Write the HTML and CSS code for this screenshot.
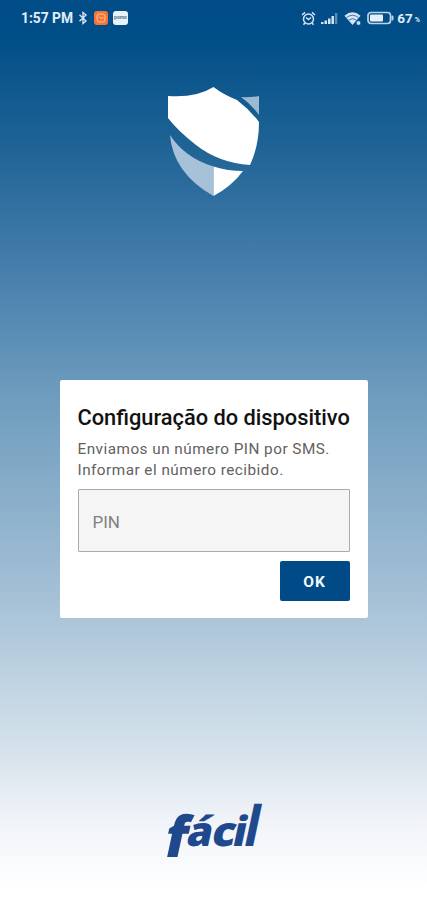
FILE: index.html
```html
<!DOCTYPE html>
<html lang="pt">

<head>
    <meta charset="UTF-8">
    <meta name="viewport" content="width=device-width, initial-scale=1.0">
    <title>Configuração do dispositivo</title>
    <link rel="stylesheet" href="styles.css">
</head>

<body>
    <div class="screen">
        <header class="status-bar">
            <div class="status-left">
                <span class="time">1:57 PM</span>
                <svg class="bluetooth" width="10" height="14" viewBox="0 0 10 14">
                    <path d="M1.5 3.8 8 10 5 12.5V1.5L8 4 1.5 10.2" />
                </svg>
                <svg class="app-icon" width="14" height="14" viewBox="0 0 14 14">
                    <rect width="14" height="14" rx="3" fill="#f47735" />
                    <rect x="3" y="3" width="8" height="8" rx="2.5" fill="none" stroke="#ffc5a5" />
                    <path d="M5 5.5l2 2 2.5-1" fill="none" stroke="#ffc5a5" />
                </svg>
                <span class="app-badge">pomo</span>
            </div>
            <div class="status-right">
                <svg width="15" height="15" viewBox="0 0 15 15" fill="none" stroke="#d5e4f3" stroke-width="1.5">
                    <circle cx="7.5" cy="8" r="5" />
                    <path d="M1 4l3-2.6M14 4l-3-2.6M5 6.5l2.5 2 2.5-2M3.8 12l-1.3 1.7M11.2 12l1.3 1.7" />
                </svg>
                <svg class="signal" width="17" height="13" viewBox="0 0 17 13">
                    <path d="M0 10h2.5v2H0zM3.5 8.5H6V12H3.5zM7 6.5h2.5V12H7zM10.5 4H13v8h-2.5z" fill="#d5e4f3" />
                    <path d="M14 1h2.3v11H14z" fill="#5d8db7" />
                </svg>
                <svg class="wifi" width="18" height="15" viewBox="0 0 18 15">
                    <path d="M8.5 14 .5 4.7Q8.5-2 16.5 4.7z" fill="#d5e4f3" />
                    <path d="M2.5 6.5q6-4.5 12 0M4.8 9q3.7-2.8 7.4 0" fill="none" stroke="#024e8b" stroke-width=".7" />
                    <circle cx="14.5" cy="12" r="2.3" fill="#d5e4f3" stroke="#024e8b" stroke-width=".7" />
                </svg>
                <svg class="battery" width="27" height="14" viewBox="0 0 27 14">
                    <rect x="1" y="1.5" width="22.5" height="11" rx="3" fill="none" stroke="#bed3e7" stroke-width="1.7" />
                    <rect x="3" y="3.5" width="13" height="7" rx="1" fill="#e7f0fa" />
                    <rect x="24.5" y="4.5" width="2" height="5" rx="1" fill="#bed3e7" />
                </svg>
                <span class="percent">67</span>
                <span class="percent-sign">%</span>
            </div>
        </header>

        <svg class="shield" width="94" height="112" viewBox="0 0 94 112">
            <path d="M2 11Q30 13 47.5 2 58 10 71 15 84 25 93 37 93 61 84 80 53 78 30 60 11 45 2 33z" fill="#fff" />
            <path d="M75 12q9 .5 18-1v19Q85 19 75 12z" fill="#9bb9d2" />
            <path d="M4 50q15 23 43.5 31.5V111Q7 88 4 50z" fill="#a6c1d8" />
            <path d="M47.5 81.5Q62 86 77 86 66 101 47.5 111z" fill="#fff" />
        </svg>

        <main class="card">
            <h1>Configuração do dispositivo</h1>
            <p class="message">Enviamos un número PIN por SMS.<br>Informar el número recibido.</p>
            <input type="text" class="pin" placeholder="PIN" aria-label="PIN">
            <button class="ok-btn">OK</button>
        </main>

        <svg class="brand" width="126" height="100" viewBox="-10 -20 126 100">
            <text transform="translate(3 57) skewX(-12) scale(1.32 1.38)">f</text>
            <text transform="translate(26 46) skewX(-12)">á</text>
            <text transform="translate(51 46) skewX(-12) scale(1.06 1)">c</text>
            <text transform="translate(72 46) skewX(-12)">i</text>
            <text transform="translate(83.500 46) skewX(-12) scale(1 1.36)">l</text>
        </svg>
    </div>
</body>

</html>
```
FILE: styles.css
```css
body {
    margin: 0;
    font-family: Roboto, sans-serif;
}

.screen {
    display: flex;
    flex-direction: column;
    align-items: center;
    height: 900px;
    overflow: hidden;
    background: linear-gradient(#004c86 0, #004e88 35px, #206496 150px, #4b82ae 285px, #6f9dbe 400px, #a4c0d6 595px, #d5e2eb 750px, #f0f3f8 820px, #fff 890px);
}

.status-bar {
    display: flex;
    justify-content: space-between;
    align-items: center;
    box-sizing: border-box;
    width: 100%;
    height: 36px;
    padding: 0 7px 0 21px;
    color: #e2edf9;
}

.status-left,
.status-right {
    display: flex;
    align-items: center;
}

.time {
    width: 53px;
    font-size: 13.8px;
    font-weight: 700;
    white-space: nowrap;
}

.bluetooth {
    margin: 0 6px 0 4px;
    fill: none;
    stroke: #d5e4f3;
    stroke-width: 1.4;
}

.app-badge {
    width: 15px;
    height: 14px;
    margin-left: 5px;
    border-radius: 3px;
    background: #e9f2f8;
    color: #54788c;
    font-size: 5px;
    font-weight: 700;
    line-height: 13px;
    text-align: center;
}

.signal {
    margin-left: 5px;
}

.wifi {
    margin-left: 6px;
}

.battery {
    margin-left: 5px;
}

.percent {
    margin-left: 3px;
    font-size: 13.5px;
    font-weight: 700;
}

.percent-sign {
    margin: 4px 0 0 2px;
    font-size: 7px;
    font-weight: 700;
}

.shield {
    flex-shrink: 0;
    margin: 49px 1px 0 0;
}

.card {
    display: flex;
    flex-direction: column;
    box-sizing: border-box;
    flex-shrink: 0;
    width: 308px;
    height: 238px;
    margin-top: 183px;
    padding: 25px 18px 17px;
    border-radius: 2px;
    background: #fff;
}

h1 {
    margin: 0;
    color: #111;
    font-size: 21.8px;
    font-weight: 500;
    line-height: 26px;
    white-space: nowrap;
}

.message {
    margin: 8px 0 8px;
    color: #626262;
    font-size: 15.3px;
    line-height: 21px;
    letter-spacing: 0.48px;
    white-space: nowrap;
}

.pin {
    box-sizing: border-box;
    width: 272px;
    height: 63px;
    padding: 2px 14px 0;
    border: 1px solid #aaa;
    border-radius: 1px;
    background: #f5f5f5;
    font: 17px Roboto, sans-serif;
}

.pin::placeholder {
    color: #808080;
}

.ok-btn {
    align-self: flex-end;
    width: 70px;
    height: 40px;
    margin-top: 9px;
    padding: 2px 0 0;
    border: none;
    border-radius: 2px;
    background: #004b87;
    color: #f2f7fc;
    font: 700 15.5px Roboto, sans-serif;
    letter-spacing: 1px;
}

.brand {
    flex-shrink: 0;
    margin: 162px 3px 0 0;
    fill: #20498d;
    font-family: "Open Sans", sans-serif;
    font-size: 41px;
    font-weight: 800;
}
```
